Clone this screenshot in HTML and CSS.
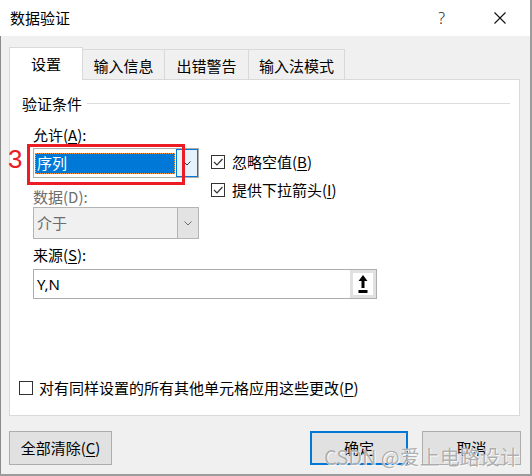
FILE: index.html
```html
<!DOCTYPE html>
<html lang="zh-CN">
<head>
<meta charset="utf-8">
<title>数据验证</title>
<link rel="stylesheet" href="styles.css">
</head>
<body>
<div class="dialog">
  <div class="titlebar">
    <span class="title">数据验证</span>
    <span class="help">?</span>
    <svg class="close" width="12" height="12" viewBox="0 0 12 12"><path d="M0.5 0.5 L11.5 11.5 M11.5 0.5 L0.5 11.5" stroke="#111" stroke-width="1.1" fill="none"/></svg>
  </div>
  <div class="main">
    <div class="tabs">
      <div class="tab active t1">设置</div>
      <div class="tab t2">输入信息</div>
      <div class="tab t3">出错警告</div>
      <div class="tab t4">输入法模式</div>
    </div>
    <div class="panel">
      <div class="group"><span>验证条件</span></div>
      <div class="fields">
        <div class="label lbl-allow">允许(<u>A</u>):</div>
        <div class="row">
          <div class="leftcol">
            <div class="combo combo-active">
              <div class="combo-field"><span class="sel">序列</span></div>
              <div class="combo-btn">
                <svg width="8" height="5" viewBox="0 0 8 5"><path d="M0.5 0.5 L4 4 L7.5 0.5" stroke="#333" stroke-width="1" fill="none"/></svg>
              </div>
              <div class="annot-box"></div>
              <div class="annot-num">3</div>
            </div>
            <div class="label disabled lbl-data">数据(D):</div>
            <div class="combo combo-disabled">
              <div class="combo-field"><span class="val">介于</span></div>
              <div class="combo-btn">
                <svg width="8" height="5" viewBox="0 0 8 5"><path d="M0.5 0.5 L4 4 L7.5 0.5" stroke="#6d6d6d" stroke-width="1" fill="none"/></svg>
              </div>
            </div>
          </div>
          <div class="checks">
            <div class="check">
              <span class="box"><svg width="12" height="12" viewBox="0 0 12 12"><path d="M2 6 L5 9 L10.5 3" stroke="#333" stroke-width="1.2" fill="none"/></svg></span>
              <span>忽略空值(<u>B</u>)</span>
            </div>
            <div class="check">
              <span class="box"><svg width="12" height="12" viewBox="0 0 12 12"><path d="M2 6 L5 9 L10.5 3" stroke="#333" stroke-width="1.2" fill="none"/></svg></span>
              <span>提供下拉箭头(<u>I</u>)</span>
            </div>
          </div>
        </div>
        <div class="label lbl-source">来源(<u>S</u>):</div>
        <div class="source">
          <div class="source-text">Y,N</div>
          <div class="source-btn">
            <svg width="10" height="18" viewBox="0 0 10 18"><polygon points="5,0 9.5,6 6.5,6 6.5,13 3.5,13 3.5,6 0.5,6" fill="#000"/><rect x="0.5" y="15" width="9" height="3" fill="#000"/></svg>
          </div>
        </div>
      </div>
      <div class="check apply-all">
        <span class="box"></span>
        <span>对有同样设置的所有其他单元格应用这些更改(<u>P</u>)</span>
      </div>
    </div>
    <div class="buttons">
      <div class="btn btn-clear">全部清除(<u>C</u>)</div>
      <div class="spacer"></div>
      <div class="btn btn-ok">确定</div>
      <div class="btn btn-cancel">取消</div>
    </div>
    <div class="watermark">CSDN @爱上电路设计</div>
  </div>
</div>
</body>
</html>
```

FILE: styles.css
```css
* { box-sizing: border-box; }
html, body { margin: 0; padding: 0; }
body {
  width: 532px;
  height: 476px;
  background: #9c9c9c;
  font-family: "Noto Sans CJK SC", "Noto Sans", sans-serif;
  font-size: 15px;
  color: #000;
  overflow: hidden;
}
u { text-decoration: underline; text-underline-offset: 2px; text-decoration-thickness: 1px; }

.dialog {
  width: 530px;
  height: 474px;
  display: flex;
  flex-direction: column;
  position: relative;
}

.titlebar {
  height: 36px;
  background: #fff;
  display: flex;
  align-items: center;
  padding-left: 10px;
}
.title { font-size: 15px; line-height: 20px; }
.help {
  margin-left: auto;
  font-family: "Noto Sans", sans-serif;
  font-size: 16px;
  line-height: 20px;
  font-weight: 300;
  color: #222;
}
.close { margin-left: 49px; margin-right: 24px; }

.main {
  flex: 1;
  background: #f0f0f0;
  border-left: 1px solid #8c8c8c;
  padding-left: 8px;
  padding-top: 11px;
  position: relative;
}

.tabs {
  display: flex;
  align-items: flex-end;
  height: 32px;
}
.tab {
  height: 30px;
  border: 1px solid #d9d9d9;
  border-bottom: none;
  display: flex;
  align-items: center;
  justify-content: center;
  line-height: 20px;
  background: #f0f0f0;
  padding-top: 2px;
}
.tab + .tab { border-left: none; }
.tab.active {
  height: 33px;
  margin-bottom: -1px;
  background: #fff;
  position: relative;
  z-index: 1;
  padding-top: 0;
}
.t1 { width: 74px; }
.t2 { width: 82px; }
.t3 { width: 84px; }
.t4 { width: 96px; }

.panel {
  width: 511px;
  height: 337px;
  background: #fff;
  border: 1px solid #d9d9d9;
  padding-left: 12px;
  padding-top: 14px;
}

.group {
  display: flex;
  align-items: center;
  height: 20px;
  line-height: 20px;
  margin-right: 9px;
}
.group::after {
  content: "";
  flex: 1;
  height: 1px;
  background: #dcdcdc;
  margin-left: 5px;
  margin-top: -2px;
}

.fields { padding-left: 11px; }
.label { line-height: 20px; height: 20px; }
.label.disabled { color: #6d6d6d; }
.lbl-allow { margin-top: 11px; }
.lbl-data { margin-top: 9px; }
.lbl-source { margin-top: 6px; }

.row { display: flex; margin-top: 3px; }
.leftcol { width: 166px; }

.combo {
  display: flex;
  height: 30px;
  border: 1px solid #adadad;
  position: relative;
}
.combo-field { flex: 1; display: flex; align-items: center; }
.combo-active .combo-field { padding: 4px 1px 3px 1px; }
.sel {
  flex: 1;
  height: 21px;
  background: #0078d7;
  color: #fff;
  line-height: 20px;
  padding-left: 2px;
  outline: 1px dotted #ff9a3c;
  outline-offset: -1px;
}
.combo-active .combo-btn {
  width: 22px;
  border: 1px solid #0078d7;
  background: #e5f1fb;
  display: flex;
  align-items: center;
  justify-content: center;
}
.combo-disabled { height: 32px; background: #f0f0f0; border-color: #b4b4b4; }
.combo-disabled .combo-field { padding-left: 3px; }
.val { color: #6d6d6d; line-height: 20px; }
.combo-disabled .combo-btn {
  width: 21px;
  border-left: 1px solid #b4b4b4;
  background: #e3e3e3;
  display: flex;
  align-items: center;
  justify-content: center;
}

.annot-box {
  position: absolute;
  left: -7px;
  top: -5px;
  width: 158px;
  height: 41px;
  border: 3px solid #ec1c24;
}
.annot-num {
  position: absolute;
  left: -26px;
  top: -3px;
  font-family: "Liberation Sans", sans-serif;
  font-size: 26px;
  line-height: 26px;
  color: #ec1c24;
}

.checks { margin-left: 12px; }
.check {
  display: flex;
  align-items: center;
  height: 28px;
  line-height: 20px;
}
.box {
  width: 14px;
  height: 14px;
  border: 1px solid #333;
  background: #fff;
  margin-right: 7px;
  display: flex;
  align-items: center;
  justify-content: center;
}

.source {
  display: flex;
  width: 344px;
  height: 30px;
  margin-top: 4px;
  border: 1px solid #adadad;
}
.source-text {
  flex: 1;
  padding-left: 3px;
  line-height: 28px;
  font-family: "Noto Sans", sans-serif;
  font-size: 15px;
}
.source-btn {
  width: 26px;
  border: 3px solid #e1e1e1;
  background: #fff;
  display: flex;
  align-items: center;
  justify-content: center;
}

.apply-all {
  margin-top: 75px;
  margin-left: -3px;
}
.apply-all .box { margin-right: 6px; }

.buttons {
  display: flex;
  margin-top: 15px;
  height: 34px;
  width: 512px;
}
.spacer { flex: 1; }
.btn {
  height: 34px;
  border: 1px solid #adadad;
  background: #e1e1e1;
  display: flex;
  align-items: center;
  justify-content: center;
  line-height: 20px;
}
.btn-clear { width: 103px; }
.btn-ok { width: 98px; border: 2px solid #0078d7; margin-right: 14px; }
.btn-cancel { width: 99px; }

.watermark {
  position: absolute;
  left: 323px;
  top: 409px;
  font-size: 20px;
  line-height: 24px;
  color: rgba(140, 140, 140, 0.7);
  text-shadow: 0 0 1px #fff, 1px 1px 0 rgba(255,255,255,0.8);
  white-space: nowrap;
}
```
